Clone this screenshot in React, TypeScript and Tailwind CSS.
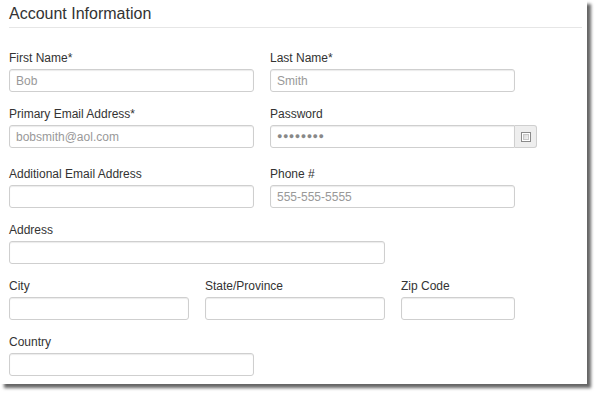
import React from 'react';

type FieldProps = {
  label: string;
  width: string;
  placeholder?: string;
  className?: string;
};

function Field({ label, width, placeholder, className }: FieldProps) {
  return (
    <div className={className}>
      <label className="block text-[12px] leading-[14px] text-[#333] mb-[4px]">{label}</label>
      <input
        readOnly
        placeholder={placeholder}
        className={`${width} h-[23px] block rounded-[3px] border border-[#cfcfcf] bg-white px-[6px] text-[12px] text-[#555] placeholder:text-[#999] shadow-[inset_0_1px_1px_rgba(0,0,0,0.08)] outline-none`}
      />
    </div>
  );
}

function PasswordField() {
  return (
    <div>
      <label className="block text-[12px] leading-[14px] text-[#333] mb-[4px]">Password</label>
      <div className="flex h-[23px] w-[267px]">
        <div className="flex-1 flex items-center rounded-l-[3px] border border-[#cfcfcf] bg-white px-[6px] shadow-[inset_0_1px_1px_rgba(0,0,0,0.08)]">
          <span className="text-[9px] tracking-[0.5px] text-[#888]">●●●●●●●●</span>
        </div>
        <div className="w-[22px] flex items-center justify-center rounded-r-[3px] border border-l-0 border-[#cfcfcf] bg-[#eeeeee]">
          <span className="block w-[10px] h-[10px] border border-[#8a8a8a] bg-white p-[1px]">
            <span className="block w-full h-full bg-gradient-to-br from-[#d8d8d8] to-[#f4f4f4] border border-[#c8c8c8]" />
          </span>
        </div>
      </div>
    </div>
  );
}

export default function App() {
  return (
    <div className="w-[600px] h-[397px] bg-white font-['Liberation_Sans',Arial,sans-serif]">
      <div className="w-[587px] h-[384px] bg-white shadow-[4px_4px_3px_rgba(0,0,0,0.6)] pl-[9px] pr-[5px]">
        <div className="pt-[4px] border-b border-[#e6e6e6] h-[28px]">
          <h1 className="text-[16px] leading-[20px] text-[#333]">Account Information</h1>
        </div>
        <div className="pt-[23px] flex flex-col">
          <div className="flex gap-[16px]">
            <Field label="First Name*" width="w-[245px]" placeholder="Bob" />
            <Field label="Last Name*" width="w-[245px]" placeholder="Smith" />
          </div>
          <div className="flex gap-[16px] mt-[15px]">
            <Field label="Primary Email Address*" width="w-[245px]" placeholder="bobsmith@aol.com" />
            <PasswordField />
          </div>
          <div className="flex gap-[16px] mt-[19px]">
            <Field label="Additional Email Address" width="w-[245px]" />
            <Field label="Phone #" width="w-[245px]" placeholder="555-555-5555" />
          </div>
          <div className="mt-[15px]">
            <Field label="Address" width="w-[376px]" />
          </div>
          <div className="flex gap-[16px] mt-[15px]">
            <Field label="City" width="w-[180px]" />
            <Field label="State/Province" width="w-[180px]" />
            <Field label="Zip Code" width="w-[114px]" />
          </div>
          <div className="mt-[15px]">
            <Field label="Country" width="w-[245px]" />
          </div>
        </div>
      </div>
    </div>
  );
}
